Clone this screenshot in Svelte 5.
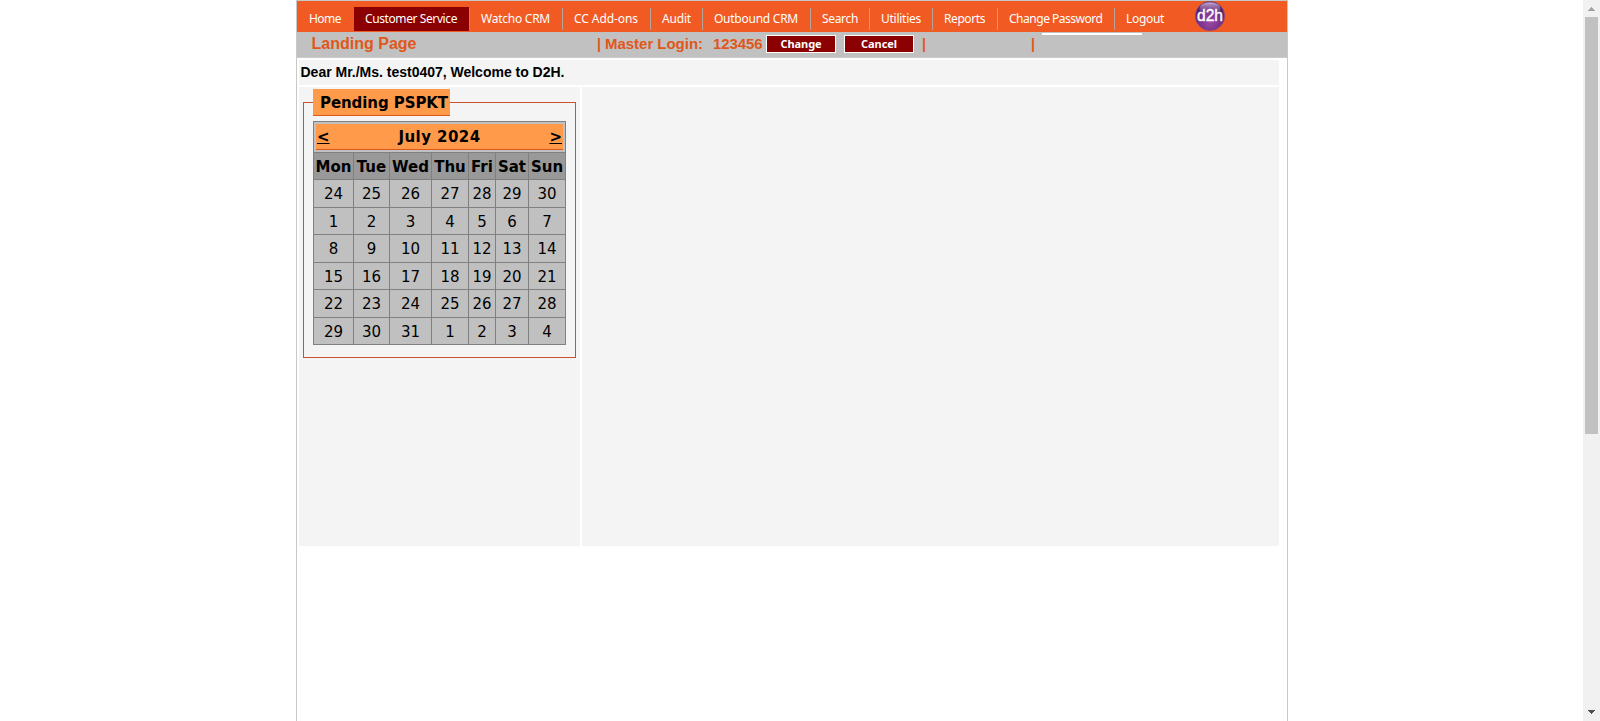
<script>
  const menu = [
    { label: 'Home', width: 56, text: 32 },
    { label: 'Customer Service', width: 116, text: 92, active: true },
    { label: 'Watcho CRM', width: 93, text: 69 },
    { label: 'CC Add-ons', width: 88, text: 64 },
    { label: 'Audit', width: 52, text: 29 },
    { label: 'Outbound CRM', width: 108, text: 84 },
    { label: 'Search', width: 59, text: 36 },
    { label: 'Utilities', width: 63, text: 40 },
    { label: 'Reports', width: 65, text: 41 },
    { label: 'Change Password', width: 117, text: 93.5 },
    { label: 'Logout', width: 61, text: 38 }
  ];

  const days = ['Mon', 'Tue', 'Wed', 'Thu', 'Fri', 'Sat', 'Sun'];
  const weeks = [
    [24, 25, 26, 27, 28, 29, 30],
    [1, 2, 3, 4, 5, 6, 7],
    [8, 9, 10, 11, 12, 13, 14],
    [15, 16, 17, 18, 19, 20, 21],
    [22, 23, 24, 25, 26, 27, 28],
    [29, 30, 31, 1, 2, 3, 4]
  ];

  // Spread or tighten the letters so that a label fills its given width.
  function fit(node, width) {
    const natural = node.getBoundingClientRect().width;
    node.style.letterSpacing = (width - natural) / node.textContent.length + 'px';
  }
</script>

<div class="window">
  <div class="page">
    <nav>
      {#each menu as item}
        <a class="item" class:active={item.active} class:last={item.label === 'Logout'} style:width="{item.width}px"
          ><span use:fit={item.text}>{item.label}</span></a>
      {/each}
      <svg class="logo" width="30" height="30" viewBox="0 0 30 30">
        <defs>
          <radialGradient id="orb" cx="50%" cy="70%" r="60%">
            <stop offset="0" stop-color="#a04aa5" />
            <stop offset="0.65" stop-color="#75308a" />
            <stop offset="1" stop-color="#4c2062" />
          </radialGradient>
          <linearGradient id="shine" x1="0" y1="0" x2="0" y2="1">
            <stop offset="0" stop-color="#d7bde0" stop-opacity="0.9" />
            <stop offset="1" stop-color="#8b4b9b" stop-opacity="0.1" />
          </linearGradient>
        </defs>
        <circle cx="15" cy="15" r="14.6" fill="url(#orb)" stroke="#7d4a88" stroke-width="0.8" />
        <ellipse cx="15" cy="7.5" rx="10.5" ry="6.2" fill="url(#shine)" />
        <text x="15" y="20" text-anchor="middle" textLength="26" lengthAdjust="spacingAndGlyphs">d2h</text>
      </svg>
    </nav>

    <header>
      <h1><span use:fit={105}>Landing Page</span></h1>
      <div class="login">
        <span class="bar">|</span>
        <span class="master"><span use:fit={98}>Master Login:</span></span>
        <span class="number"><span use:fit={49.5}>123456</span></span>
        <button><span use:fit={41}>Change</span></button>
        <button><span use:fit={36}>Cancel</span></button>
      </div>
      <span class="bar second">|</span>
      <span class="bar third">|</span>
      <span class="strip"></span>
    </header>

    <main>
      <p class="welcome"><span use:fit={264}>Dear Mr./Ms. test0407, Welcome to D2H.</span></p>
      <div class="columns">
        <section class="side">
          <div class="group">
            <div class="legend"><span use:fit={128}>Pending PSPKT</span></div>
            <div class="calendar">
              <div class="title">
                <a>&lt;</a>
                <span use:fit={82}>July 2024</span>
                <a>&gt;</a>
              </div>
              <div class="row head">
                {#each days as day}<b>{day}</b>{/each}
              </div>
              {#each weeks as week}
                <div class="row">
                  {#each week as date}<span>{date}</span>{/each}
                </div>
              {/each}
            </div>
          </div>
        </section>
        <section class="content"></section>
      </div>
    </main>
  </div>

  <div class="scrollbar">
    <svg width="17" height="17" viewBox="0 0 17 17" shape-rendering="crispEdges">
      <path d="M8 7h1v1h1v1h1v1h1v1H5v-1h1V9h1V8h1z" fill="#a3a3a3" />
    </svg>
    <div class="thumb"></div>
    <svg class="down" width="17" height="17" viewBox="0 0 17 17" shape-rendering="crispEdges">
      <path d="M5 6h7v1h-1v1h-1v1H9v1H8V9H7V8H6V7H5z" fill="#505050" />
    </svg>
  </div>
</div>

<style>
  :global(body) {
    margin: 0;
    background: #fff;
    overflow: hidden;
  }

  .window {
    display: flex;
    width: 1600px;
    height: 721px;
    overflow: hidden;
    font-family: 'Liberation Sans', Arial, sans-serif;
  }

  .window * {
    box-sizing: border-box;
  }

  .window span {
    white-space: nowrap;
  }

  .page {
    width: 992px;
    margin-left: 296px;
    border: 1px solid #c8c8c8;
    border-bottom: 0;
  }

  nav {
    display: flex;
    height: 31px;
    padding-left: 1px;
    background: #f15a22;
    font: 12px 'Noto Sans', 'Open Sans', sans-serif;
    color: #fff;
  }

  .item {
    flex: none;
    height: 24px;
    margin-top: 6px;
    padding-left: 11px;
    line-height: 24px;
    background: linear-gradient(#b5a398, #b5a398) right 1px / 1px 22px no-repeat;
  }

  .item:first-child,
  .item.last {
    background: none;
  }

  .item.active {
    background: linear-gradient(#c08070, #c08070) right 1px / 1px 22px no-repeat,
      linear-gradient(#8b0000, #8b0000) left / calc(100% - 1px) 100% no-repeat;
  }

  .logo {
    flex: none;
    margin-left: 19px;
  }

  .logo text {
    font: 17px 'Liberation Sans', Arial, sans-serif;
    fill: #fff;
    stroke: #fff;
    stroke-width: 0.4;
  }

  header {
    display: flex;
    height: 26px;
    background: #c1c1c1;
    border-bottom: 1px solid #cacaca;
    color: #e0571b;
    font-weight: bold;
  }

  h1 {
    width: 300px;
    margin: 0;
    padding-left: 14.5px;
    font-size: 16px;
    line-height: 23px;
  }

  .login {
    display: flex;
    width: 325px;
    font-size: 15px;
    line-height: 24px;
  }

  .bar {
    flex: none;
    width: 4px;
    font-size: 14px;
    line-height: 25px;
  }

  .master {
    width: 105px;
    padding-left: 4px;
  }

  .number {
    width: 60px;
    padding-left: 7px;
  }

  button {
    flex: none;
    width: 70px;
    height: 18px;
    margin: 3px 8px 0 0;
    padding: 0;
    border: 1px solid #fff;
    background: #8b0000;
    color: #fff;
    font: bold 11px/16px 'Noto Sans', 'Open Sans', sans-serif;
  }

  .third {
    margin-left: 105px;
  }

  .strip {
    width: 100px;
    height: 2px;
    margin: 1px 0 0 7px;
    background: #fff;
  }

  main {
    padding: 2px 8px 0 2px;
  }

  .welcome {
    height: 25px;
    margin: 0 0 2px;
    padding-left: 1.5px;
    background: #f4f4f4;
    font-size: 14px;
    font-weight: bold;
    line-height: 25px;
  }

  .columns {
    display: grid;
    grid-template-columns: 281px 1fr;
    gap: 2px;
    height: 459px;
    font-family: 'DejaVu Sans', Verdana, sans-serif;
    font-size: 15px;
  }

  .side,
  .content {
    background: #f4f4f4;
  }

  .side {
    padding: 15px 4px;
  }

  .group {
    height: 256px;
    padding: 0 9px;
    border: 1px solid #c5532b;
  }

  .legend {
    width: 137px;
    height: 27px;
    margin-top: -14px;
    padding-left: 7px;
    background: #ff9a4b;
    border-bottom: 1px solid #e0571b;
    font-weight: bold;
    line-height: 29px;
  }

  .calendar {
    display: grid;
    grid-template-rows: 30px 26px 27px 26px 27px 26px 27px 26px;
    gap: 1px;
    width: 253px;
    margin-top: 5px;
    padding: 1px;
    background: #808080;
  }

  .title {
    display: flex;
    justify-content: space-between;
    padding: 0 1px;
    border: 2px solid #c0c0c0;
    background: linear-gradient(#e0571b, #e0571b) bottom / 100% 1px no-repeat #ff9a4b;
    background-clip: padding-box;
    font-weight: bold;
    line-height: 26px;
  }

  .title a {
    text-decoration: underline;
  }

  .row {
    display: grid;
    grid-template-columns: 39px 35px 41px 36px 26px 32px 36px;
    grid-template-rows: 100%;
    gap: 1px;
    min-height: 0;
    text-align: center;
    line-height: 29px;
  }

  .row > span {
    background: #c0c0c0;
  }

  .row > b {
    display: flex;
    justify-content: center;
    background: #999;
  }

  .scrollbar {
    display: flex;
    flex-direction: column;
    width: 17px;
    margin-left: auto;
    background: #f1f1f1;
  }

  .thumb {
    width: 13px;
    height: 417px;
    margin-left: 2px;
    background: #c1c1c1;
  }

  .down {
    margin-top: auto;
  }
</style>
